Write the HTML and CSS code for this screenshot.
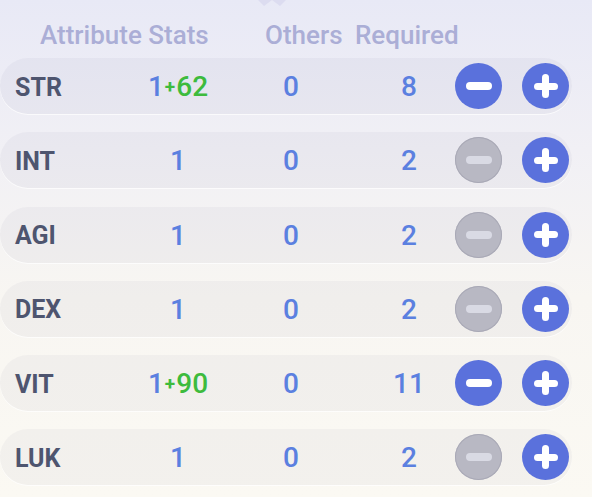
FILE: index.html
```html
<!DOCTYPE html>
<html>

<head>
    <meta charset="UTF-8">
    <meta name="viewport" content="width=device-width, initial-scale=1.0">
    <title>Attribute Stats</title>
    <link rel="stylesheet" href="styles.css">
</head>

<body>
    <div class="panel">
        <!-- top ornament, half hidden -->
        <svg class="ornament" width="40" height="12" viewBox="0 0 40 12">
            <path d="M4 0 L12 8 L20 2 L28 8 L36 0 Z" fill="#dcdcf0" />
        </svg>

        <div class="head">
            <span class="h-attr">Attribute Stats</span>
            <span class="h-others">Others</span>
            <span class="h-req">Required</span>
        </div>

        <ul class="stats">
            <li class="row">
                <span class="name">STR</span>
                <span class="val">1<em><small>+</small>62</em></span>
                <span class="val">0</span>
                <span class="val req">8</span>
                <span class="btns">
                    <button class="btn minus"></button>
                    <button class="btn plus"></button>
                </span>
            </li>
            <li class="row">
                <span class="name">INT</span>
                <span class="val">1</span>
                <span class="val">0</span>
                <span class="val req">2</span>
                <span class="btns">
                    <button class="btn minus off"></button>
                    <button class="btn plus"></button>
                </span>
            </li>
            <li class="row">
                <span class="name">AGI</span>
                <span class="val">1</span>
                <span class="val">0</span>
                <span class="val req">2</span>
                <span class="btns">
                    <button class="btn minus off"></button>
                    <button class="btn plus"></button>
                </span>
            </li>
            <li class="row">
                <span class="name">DEX</span>
                <span class="val">1</span>
                <span class="val">0</span>
                <span class="val req">2</span>
                <span class="btns">
                    <button class="btn minus off"></button>
                    <button class="btn plus"></button>
                </span>
            </li>
            <li class="row">
                <span class="name">VIT</span>
                <span class="val">1<em><small>+</small>90</em></span>
                <span class="val">0</span>
                <span class="val req">11</span>
                <span class="btns">
                    <button class="btn minus"></button>
                    <button class="btn plus"></button>
                </span>
            </li>
            <li class="row">
                <span class="name">LUK</span>
                <span class="val">1</span>
                <span class="val">0</span>
                <span class="val req">2</span>
                <span class="btns">
                    <button class="btn minus off"></button>
                    <button class="btn plus"></button>
                </span>
            </li>
        </ul>
    </div>
</body>

</html>
```

FILE: styles.css
```css
html,
body {
    margin: 0;
    height: 100%;
}

body {
    font-family: Roboto, "Noto Sans", sans-serif;
    background: linear-gradient(180deg, #e8e9f6 0%, #f1f0f5 30%, #f8f6f2 60%, #fbf9f3 100%);
    overflow: hidden;
}

.panel {
    position: relative;
    width: 592px;
    height: 497px;
}

.ornament {
    position: absolute;
    left: 252px;
    top: -2px;
}

.head {
    display: flex;
    align-items: center;
    height: 28px;
    padding-top: 21px;
    margin-bottom: 9px;
    font-size: 26px;
    font-weight: 500;
    color: #abaed6;
}

.h-attr {
    margin-left: 40px;
    width: 225px;
}

.h-others {
    width: 90px;
}

.stats {
    list-style: none;
    margin: 0;
    padding: 0;
    display: flex;
    flex-direction: column;
    gap: 18.3px;
}

.row {
    display: grid;
    grid-template-columns: 128px 100px 126px 100px auto;
    align-items: center;
    width: 572px;
    height: 56px;
    border-radius: 28px;
    background: rgba(70, 70, 110, 0.045);
    box-shadow: 0 1px 0 rgba(255, 255, 255, 0.7);
}

.name {
    padding-left: 15px;
    font-size: 25px;
    font-weight: 700;
    color: #4e556f;
    padding-top: 2px;
}

.val {
    text-align: center;
    font-size: 28px;
    font-weight: 500;
    color: #5b80e0;
    padding-top: 1px;
}

.val em {
    font-style: normal;
    color: #3dbb3d;
}

.val small {
    font-size: 19px;
    font-weight: 700;
    margin: 0 1px;
    vertical-align: 3px;
}

.req {
    padding-left: 10px;
}

.btns {
    display: flex;
    gap: 20px;
    margin-left: 1px;
}

.btn {
    position: relative;
    width: 47px;
    height: 46px;
    border-radius: 50%;
    border: none;
    padding: 0;
    background: #5a71dc;
    cursor: pointer;
}

.btn::before,
.btn::after {
    content: "";
    position: absolute;
    left: 50%;
    top: 50%;
    background: #fff;
    border-radius: 4px;
}

.btn::before {
    width: 26px;
    height: 8px;
    margin: -4px 0 0 -13px;
}

.plus::before {
    width: 24px;
    height: 7px;
    margin: -3.5px 0 0 -12px;
}

.plus::after {
    width: 7px;
    height: 24px;
    margin: -12px 0 0 -3.5px;
}

.off {
    background: #b8b8c3;
    box-shadow: inset 0 0 0 1px #a9a9b6;
}

.off::before {
    background: #d9dae4;
}
```
